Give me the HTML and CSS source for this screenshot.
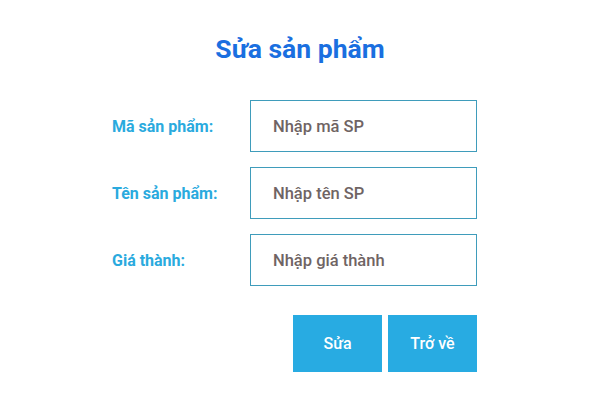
FILE: index.html
```html
<!DOCTYPE html>
<html>
<head>
<meta charset="utf-8">
<link rel="stylesheet" href="styles.css">
</head>
<body>
<div class="page">
  <h1 class="title">Sửa sản phẩm</h1>
  <form class="form">
    <label class="label" for="ma">Mã sản phẩm:</label>
    <input class="field" id="ma" type="text" placeholder="Nhập mã SP">
    <label class="label" for="ten">Tên sản phẩm:</label>
    <input class="field" id="ten" type="text" placeholder="Nhập tên SP">
    <label class="label" for="gia">Giá thành:</label>
    <input class="field" id="gia" type="text" placeholder="Nhập giá thành">
    <div class="actions">
      <button class="btn" type="button">Sửa</button>
      <button class="btn" type="button">Trở về</button>
    </div>
  </form>
</div>
</body>
</html>
```
FILE: styles.css
```css
html, body {
  margin: 0;
  padding: 0;
  background: #ffffff;
}
body {
  font-family: Roboto, "Liberation Sans", sans-serif;
  width: 600px;
  height: 400px;
  overflow: hidden;
}
.page {
  padding-top: 33px;
}
.title {
  margin: 0;
  text-align: center;
  font-size: 26.5px;
  line-height: 32px;
  font-weight: 700;
  color: #1a6fe0;
}
.form {
  margin: 35px 0 0 112px;
  display: grid;
  grid-template-columns: 138px 227px;
  row-gap: 15px;
  align-items: center;
}
.label {
  font-size: 16px;
  font-weight: 700;
  color: #2aaade;
  padding-top: 1px;
}
.field {
  box-sizing: border-box;
  height: 52px;
  width: 227px;
  margin: 0;
  border: 1.5px solid #3f9cbb;
  padding: 0 0 0 22px;
  font-family: Roboto, "Liberation Sans", sans-serif;
  font-size: 16.5px;
  font-weight: 500;
  color: #6f6464;
  outline: none;
}
.field::placeholder {
  color: #6f6464;
  opacity: 1;
}
.actions {
  grid-column: 1 / 3;
  display: flex;
  justify-content: flex-end;
  gap: 6px;
  margin-top: 14px;
}
.btn {
  width: 89px;
  height: 57px;
  border: none;
  background: #28abe2;
  color: #ffffff;
  font-family: Roboto, "Liberation Sans", sans-serif;
  font-size: 16px;
  font-weight: 500;
  padding: 0;
}
```
